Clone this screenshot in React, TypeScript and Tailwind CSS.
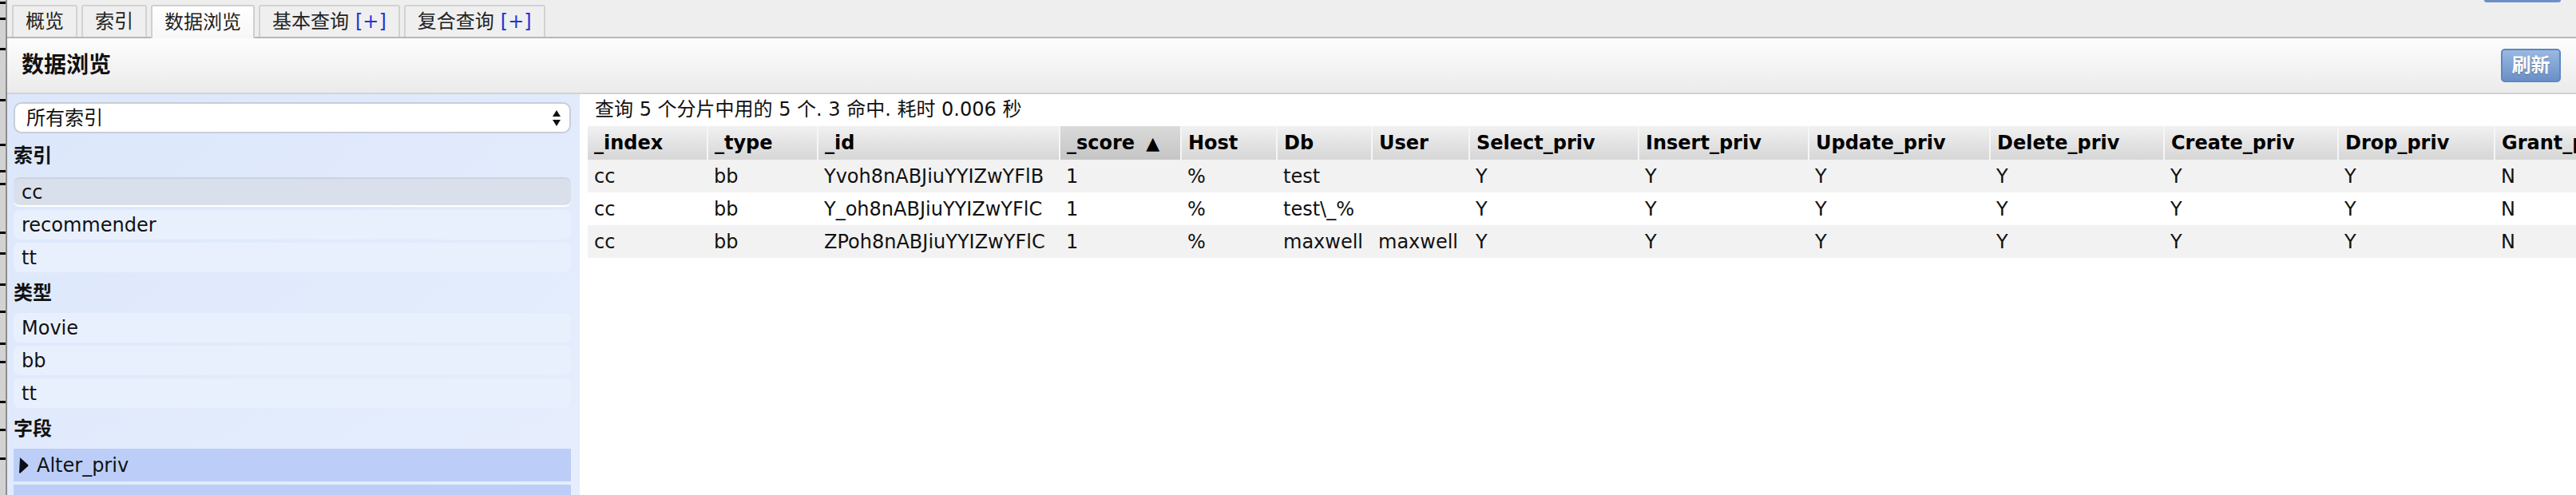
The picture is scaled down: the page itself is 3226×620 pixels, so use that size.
import React from 'react';

const font = "font-[family-name:'DejaVu_Sans','Noto_Sans_CJK_SC',sans-serif]";

const tabs = [
  { label: '概览' },
  { label: '索引' },
  { label: '数据浏览', active: true },
  { label: '基本查询', plus: true },
  { label: '复合查询', plus: true },
];

const columns: { name: string; w: string; sorted?: boolean }[] = [
  { name: '_index', w: 'w-[150px]' },
  { name: '_type', w: 'w-[138px]' },
  { name: '_id', w: 'w-[303px]' },
  { name: '_score', w: 'w-[152px]', sorted: true },
  { name: 'Host', w: 'w-[120px]' },
  { name: 'Db', w: 'w-[119px]' },
  { name: 'User', w: 'w-[122px]' },
  { name: 'Select_priv', w: 'w-[212px]' },
  { name: 'Insert_priv', w: 'w-[213px]' },
  { name: 'Update_priv', w: 'w-[227px]' },
  { name: 'Delete_priv', w: 'w-[218px]' },
  { name: 'Create_priv', w: 'w-[218px]' },
  { name: 'Drop_priv', w: 'w-[196px]' },
  { name: 'Grant_priv', w: 'w-[200px]' },
];

const rows = [
  ['cc', 'bb', 'Yvoh8nABJiuYYIZwYFlB', '1', '%', 'test', '', 'Y', 'Y', 'Y', 'Y', 'Y', 'Y', 'N'],
  ['cc', 'bb', 'Y_oh8nABJiuYYIZwYFlC', '1', '%', 'test\\_%', '', 'Y', 'Y', 'Y', 'Y', 'Y', 'Y', 'N'],
  ['cc', 'bb', 'ZPoh8nABJiuYYIZwYFlC', '1', '%', 'maxwell', 'maxwell', 'Y', 'Y', 'Y', 'Y', 'Y', 'Y', 'N'],
];

// tick marks of the window peeking in on the far left
const ticks = [2, 22, 60, 124, 180, 213, 229, 290, 316, 355, 389, 429, 452, 502, 537, 573];

function SideItem({ label, selected }: { label: string; selected?: boolean }) {
  return (
    <div
      className={
        selected
          ? 'flex h-[37px] items-center rounded-[8px] border-t-2 border-b-2 border-t-[#ccd4e0] border-b-white bg-[#d9e0eb] pl-[10px]'
          : 'flex h-[37px] items-center rounded-[8px] bg-[#e9f0fd] pl-[10px]'
      }
    >
      {label}
    </div>
  );
}

function SectionLabel({ children }: { children: React.ReactNode }) {
  return <div className="flex h-[51px] items-center font-bold">{children}</div>;
}

export default function App() {
  return (
    <div className={`${font} flex h-[620px] w-[3226px] overflow-hidden bg-white text-[24px] text-[#111]`}>
      <div className="relative w-[9px] shrink-0 border-r-2 border-[#8d8d8d] bg-[#d2d2d2]">
        {ticks.map((t) => (
          <div key={t} className="absolute left-0 h-[3px] w-[7px] bg-black" style={{ top: t }} />
        ))}
      </div>

      <div className="flex min-w-0 flex-1 flex-col">
        {/* tab bar */}
        <div className="flex h-[48px] shrink-0 items-end border-b-2 border-[#b7b7b7] bg-[#eeeeee] pl-[6px]">
          {tabs.map((t) => (
            <div
              key={t.label}
              className={
                t.active
                  ? 'z-10 -mb-[2px] mr-[5px] flex h-[42px] items-center rounded-t-[3px] border-2 border-b-0 border-[#cfcfcf] bg-gradient-to-b from-white to-[#f7f7f7] px-[15px] text-[#222]'
                  : 'mr-[5px] flex h-[40px] items-center rounded-t-[3px] border-2 border-b-0 border-[#d2d2d2] bg-[#efefef] px-[15px] text-[#222]'
              }
            >
              {t.label}
              {t.plus && <span className="ml-[8px] text-[#2433d6]">[+]</span>}
            </div>
          ))}
          <div className="mr-[19px] ml-auto h-[3px] w-[96px] self-start rounded-b-[3px] bg-[#6e8fc6]" />
        </div>

        {/* title band */}
        <div className="flex h-[70px] shrink-0 items-center justify-between border-b-2 border-[#d2d2d2] bg-gradient-to-b from-[#fdfdfd] to-[#ebebeb] pr-[19px] pl-[18px]">
          <div className="text-[28px] font-bold text-[#111]">数据浏览</div>
          <button className="flex h-[42px] w-[75px] items-center justify-center rounded-[5px] border-2 border-[#5f86c0] bg-gradient-to-b from-[#9ab9e2] to-[#6990c7] font-bold text-white [text-shadow:0_1px_1px_rgba(0,0,0,0.35)]">
            刷新
          </button>
        </div>

        <div className="flex min-h-0 flex-1">
          {/* sidebar */}
          <div className="w-[717px] shrink-0 bg-gradient-to-br from-[#dce7fb] to-[#e6eefd] pt-[10px] pr-[11px] pl-[8px]">
            <div className="flex h-[39px] items-center justify-between rounded-[10px] border-2 border-[#c7ced8] bg-white pr-[10px] pl-[14px]">
              <span>所有索引</span>
              <svg width="12" height="22" viewBox="0 0 12 22">
                <path d="M6 1 L11 9 L1 9 Z" fill="#111" />
                <path d="M1 13 L11 13 L6 21 Z" fill="#111" />
              </svg>
            </div>
            <div className="flex h-[55px] items-center font-bold">索引</div>
            <div className="flex flex-col gap-[4px]">
              <SideItem label="cc" selected />
              <SideItem label="recommender" />
              <SideItem label="tt" />
            </div>
            <SectionLabel>类型</SectionLabel>
            <div className="flex flex-col gap-[4px]">
              <SideItem label="Movie" />
              <SideItem label="bb" />
              <SideItem label="tt" />
            </div>
            <SectionLabel>字段</SectionLabel>
            <div className="flex flex-col gap-[4px]">
              <div className="flex h-[41px] items-center bg-[#bccef8] pl-[6px]">
                <svg width="13" height="22" viewBox="0 0 13 22" className="mr-[10px]">
                  <path d="M2 2 Q1 1 2.5 1.5 L12 10 Q13 11 12 12 L2.5 20.5 Q1 21 1 19.5 Z" fill="#0d0d1a" />
                </svg>
                Alter_priv
              </div>
              <div className="h-[41px] bg-[#bccef8]" />
            </div>
          </div>

          {/* results */}
          <div className="min-w-0 flex-1 overflow-hidden bg-white pl-[10px]">
            <div className="flex h-[40px] items-center pl-[9px] pb-[2px]">查询 5 个分片中用的 5 个. 3 命中. 耗时 0.006 秒</div>
            <table className="w-[2588px] table-fixed border-collapse">
              <thead>
                <tr>
                  {columns.map((c, i) => (
                    <th
                      key={c.name}
                      className={[
                        c.w,
                        'h-[42px] p-0 pl-[8px] text-left font-bold whitespace-nowrap text-black',
                        i > 0 ? 'border-l-2 border-[#f6f6f6]' : '',
                        c.sorted
                          ? 'bg-gradient-to-b from-[#dadada] to-[#c5c5c5]'
                          : 'bg-gradient-to-b from-[#f1f1f1] to-[#d6d6d6]',
                      ].join(' ')}
                    >
                      {c.name}
                      {c.sorted && <span className="ml-[14px] text-[22px]">▲</span>}
                    </th>
                  ))}
                </tr>
              </thead>
              <tbody>
                {rows.map((r, ri) => (
                  <tr key={ri} className={ri % 2 === 0 ? 'bg-[#f2f2f2]' : 'bg-white'}>
                    {r.map((v, ci) => (
                      <td key={ci} className="h-[41px] p-0 pl-[8px] whitespace-nowrap">
                        {v}
                      </td>
                    ))}
                  </tr>
                ))}
              </tbody>
            </table>
          </div>
        </div>
      </div>
    </div>
  );
}
